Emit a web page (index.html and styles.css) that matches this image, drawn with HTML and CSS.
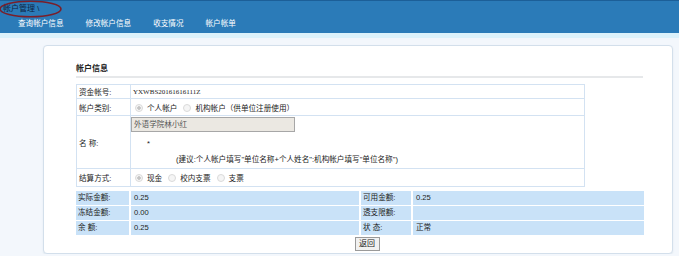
FILE: index.html
```html
<!doctype html>
<html>
<head>
    <meta charset="utf-8">
    <title>帐户信息</title>
    <link rel="stylesheet" href="styles.css">
</head>
<body>
<div class="header">
    <div class="title-row">
        <span class="title">帐户管理 \
            <svg class="ring" width="63" height="18" viewBox="0 0 63 18"><ellipse cx="31.5" cy="9" rx="30.5" ry="7.8" fill="none" stroke="#7a1f2a" stroke-width="1.6"/></svg>
        </span>
    </div>
    <ul class="nav">
        <li>查询帐户信息</li>
        <li>修改帐户信息</li>
        <li>收支情况</li>
        <li>帐户帐单</li>
    </ul>
</div>
<div class="strip"></div>

<div class="panel">
    <h3 class="caption">帐户信息</h3>
    <table class="form">
        <tr class="r1">
            <th>资金帐号:</th>
            <td class="code">YXWBS20161616111Z</td>
        </tr>
        <tr class="r2">
            <th>帐户类别:</th>
            <td><span class="radio on"></span>个人帐户<span class="radio"></span>机构帐户（供单位注册使用）</td>
        </tr>
        <tr class="r3">
            <th>名 称:</th>
            <td>
                <div class="input">外语学院林小红</div>
                <div class="star">*</div>
                <div class="hint">(建议:个人帐户填写"单位名称+个人姓名":机构帐户填写"单位名称")</div>
            </td>
        </tr>
        <tr class="r4">
            <th>结算方式:</th>
            <td><span class="radio on"></span>现金<span class="radio"></span>校内支票<span class="radio"></span>支票</td>
        </tr>
    </table>

    <div class="info">
        <div>实际金额:</div><div>0.25</div><div>可用金额:</div><div>0.25</div>
        <div>冻结金额:</div><div>0.00</div><div>透支限额:</div><div></div>
        <div>余 额:</div><div>0.25</div><div>状 态:</div><div>正常</div>
    </div>

    <div class="actions"><button class="btn">返回</button></div>
</div>
</body>
</html>
```

FILE: styles.css
```css
*{
    margin:0;
    padding:0;
    list-style:none;
}
body{
    background:#f3f7fc;
    font-family:"Liberation Sans","Noto Sans CJK SC",sans-serif;
    font-size:7.6px;
    color:#222;
}

.header{
    height:32px;
    background:#2b7bb8;
    border-top:1px solid #1c5f98;
}
.title-row{
    height:15px;
    padding-left:3px;
}
.title{
    position:relative;
    display:inline-block;
    line-height:16px;
    font-size:8px;
    color:#10233f;
}
.ring{
    position:absolute;
    left:-4px;
    top:-1px;
}
.nav{
    display:flex;
    gap:22px;
    padding-left:18px;
    height:17px;
    line-height:15px;
}
.nav li{
    color:#fff;
}

.strip{
    height:5px;
    background:#dcf2fb;
}

.panel{
    margin:7px 6px 0 43px;
    height:207px;
    background:#fff;
    border:1px solid #d3dfeb;
    border-radius:4px;
    box-shadow:0 1px 2px #e0e8f0;
    padding:0 0 0 32px;
}
.caption{
    margin-top:17px;
    width:567px;
    font-size:8px;
    line-height:12px;
    padding-bottom:1px;
    border-bottom:2px solid #e6e8ea;
}

.form{
    margin-top:6px;
    width:509px;
    border-collapse:collapse;
    border:1px solid #d3e2f2;
}
.form th,
.form td{
    border:1px solid #d3e2f2;
    font-weight:normal;
    text-align:left;
    vertical-align:middle;
}
.form th{
    width:51px;
    padding-left:2px;
}
.form td{
    padding-left:0;
}
.form .code{
    padding-left:2px;
    font-family:"Liberation Serif","Noto Sans CJK SC",serif;
    font-size:7px;
}
.r1{ height:14px; }
.r2{ height:17px; }
.r3{ height:53px; }
.r4{ height:18px; }
.r2 td,
.r4 td{
    padding-left:3px;
}

.radio{
    display:inline-block;
    width:6px;
    height:6px;
    border:1px solid #dadada;
    border-radius:50%;
    background:#f5f5f5;
    margin:0 4px 0 1px;
    vertical-align:-1px;
}
.radio.on{
    background:radial-gradient(circle,#c4c4c4 0 1.5px,#f5f5f5 2px);
}
.r2 .radio + .radio,
.r4 .radio:not(:first-child){
    margin-left:6px;
}

.r3 td{
    vertical-align:top;
    padding-top:1px;
}
.input{
    width:160px;
    height:13px;
    line-height:13px;
    padding-left:2px;
    background:#ebe8e2;
    border:1px solid #a7a7a7;
    color:#555;
}
.star{
    margin:7px 0 0 16px;
    line-height:10px;
}
.hint{
    margin:6px 0 0 45px;
    line-height:10px;
}

.info{
    margin-top:4px;
    width:566px;
    display:grid;
    grid-template-columns:53px 228px 50px 231px;
    gap:1px 2px;
}
.info div{
    height:14px;
    line-height:14px;
    background:#c9e2f8;
    padding-left:2px;
}
.info div:nth-child(2n){
    padding-left:3px;
}

.actions{
    width:566px;
    margin-top:2px;
    padding-left:8px;
    text-align:center;
}
.btn{
    width:25px;
    height:14px;
    font-family:inherit;
    font-size:8px;
    line-height:12px;
    background:#f1f1f1;
    border:1px solid #9a9a9a;
    color:#222;
}
```
